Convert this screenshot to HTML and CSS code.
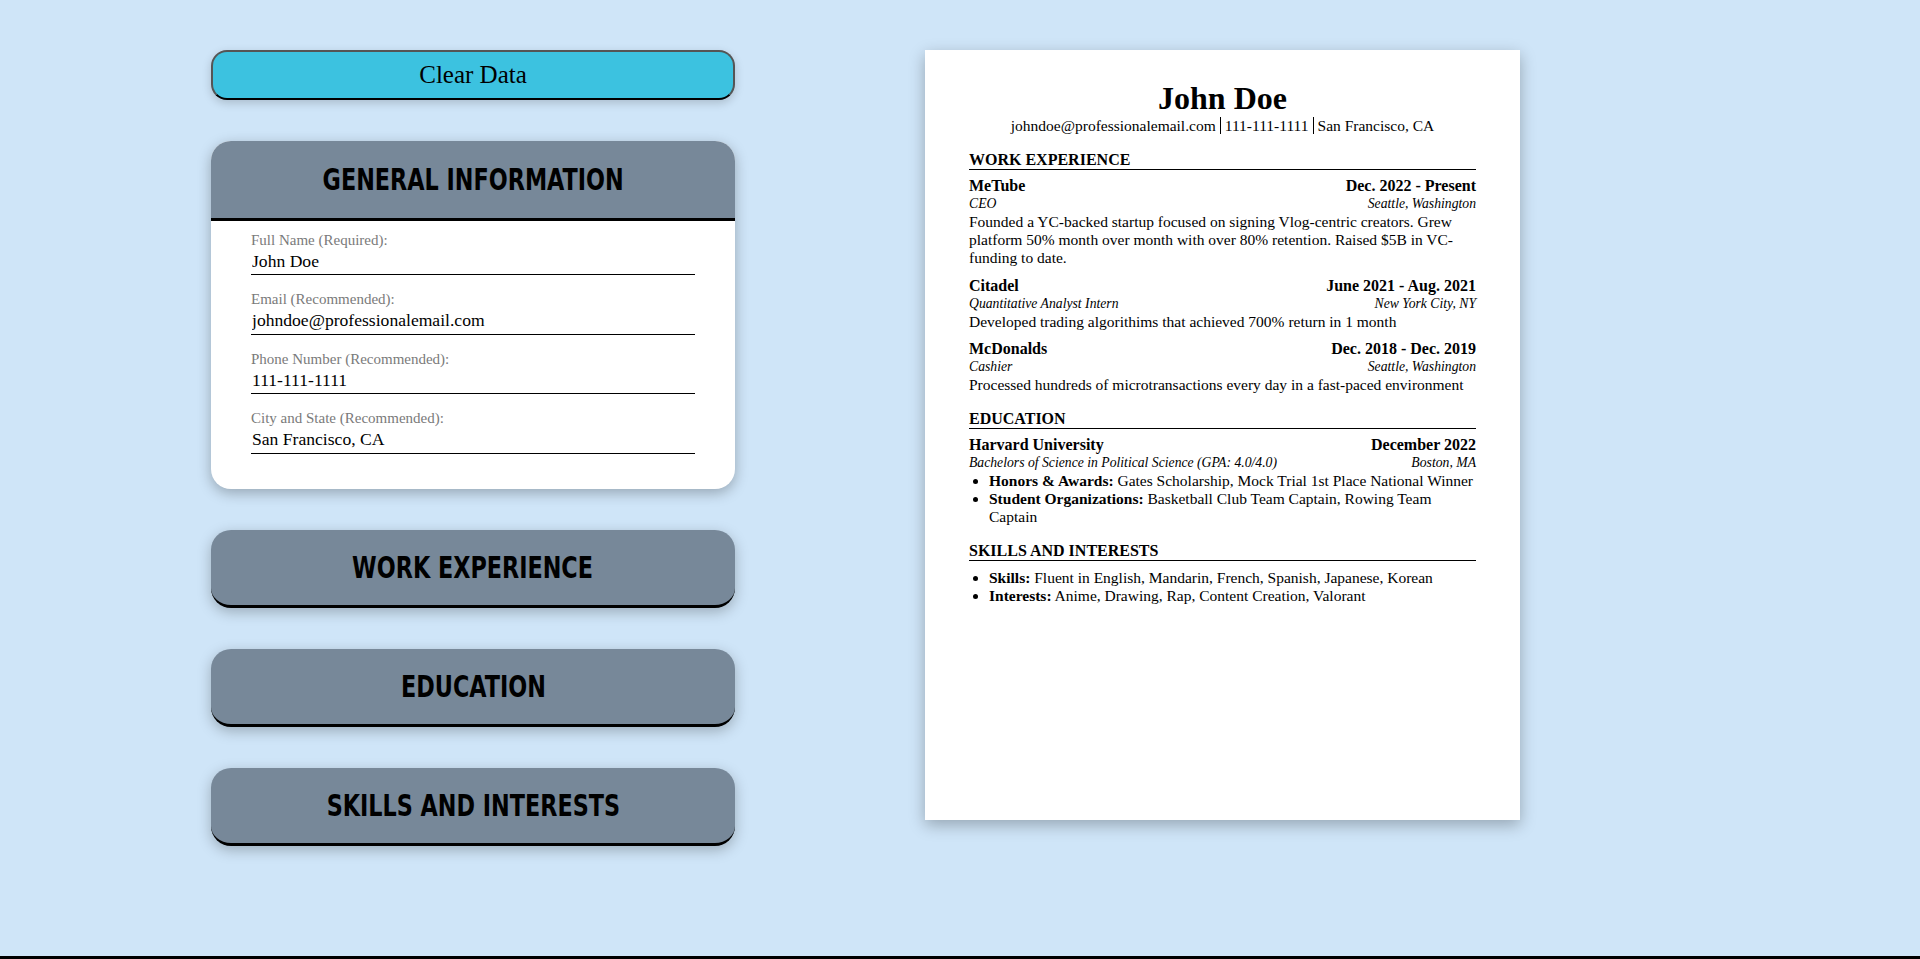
FILE: index.html
```html
<!DOCTYPE html>
<html lang="en">
<head>
<meta charset="utf-8">
<title>Resume Builder</title>
<link rel="stylesheet" href="styles.css">
</head>
<body>
<div class="page">
  <main class="layout">
    <section class="editor">
      <button class="clear-btn" type="button">Clear Data</button>

      <div class="card">
        <div class="card-head"><h2 class="heading">GENERAL INFORMATION</h2></div>
        <form class="card-body">
          <label class="field">
            <span class="field-label">Full Name (Required):</span>
            <input class="field-input" type="text" value="John Doe">
          </label>
          <label class="field">
            <span class="field-label">Email (Recommended):</span>
            <input class="field-input" type="text" value="johndoe@professionalemail.com">
          </label>
          <label class="field">
            <span class="field-label">Phone Number (Recommended):</span>
            <input class="field-input" type="text" value="111-111-1111">
          </label>
          <label class="field">
            <span class="field-label">City and State (Recommended):</span>
            <input class="field-input" type="text" value="San Francisco, CA">
          </label>
        </form>
      </div>

      <div class="tab"><h2 class="heading">WORK EXPERIENCE</h2></div>
      <div class="tab"><h2 class="heading">EDUCATION</h2></div>
      <div class="tab"><h2 class="heading">SKILLS AND INTERESTS</h2></div>
    </section>

    <article class="resume">
      <h1 class="r-name">John Doe</h1>
      <div class="r-contact">
        <span>johndoe@professionalemail.com</span><span class="sep"></span><span>111-111-1111</span><span class="sep"></span><span>San Francisco, CA</span>
      </div>

      <section class="r-section">
        <h3 class="r-title">WORK EXPERIENCE</h3>
        <div class="r-entries">
          <div class="r-entry">
            <div class="r-row r-bold"><span>MeTube</span><span>Dec. 2022 - Present</span></div>
            <div class="r-row r-italic"><span>CEO</span><span>Seattle, Washington</span></div>
            <p class="r-text">Founded a YC-backed startup focused on signing Vlog-centric creators. Grew platform 50% month over month with over 80% retention. Raised $5B in VC-funding to date.</p>
          </div>
          <div class="r-entry">
            <div class="r-row r-bold"><span>Citadel</span><span>June 2021 - Aug. 2021</span></div>
            <div class="r-row r-italic"><span>Quantitative Analyst Intern</span><span>New York City, NY</span></div>
            <p class="r-text">Developed trading algorithims that achieved 700% return in 1 month</p>
          </div>
          <div class="r-entry">
            <div class="r-row r-bold"><span>McDonalds</span><span>Dec. 2018 - Dec. 2019</span></div>
            <div class="r-row r-italic"><span>Cashier</span><span>Seattle, Washington</span></div>
            <p class="r-text">Processed hundreds of microtransactions every day in a fast-paced environment</p>
          </div>
        </div>
      </section>

      <section class="r-section">
        <h3 class="r-title">EDUCATION</h3>
        <div class="r-entries">
          <div class="r-entry">
            <div class="r-row r-bold"><span>Harvard University</span><span>December 2022</span></div>
            <div class="r-row r-italic"><span>Bachelors of Science in Political Science (GPA: 4.0/4.0)</span><span>Boston, MA</span></div>
            <ul class="r-list">
              <li><b>Honors &amp; Awards:</b> Gates Scholarship, Mock Trial 1st Place National Winner</li>
              <li><b>Student Organizations:</b> Basketball Club Team Captain, Rowing Team Captain</li>
            </ul>
          </div>
        </div>
      </section>

      <section class="r-section">
        <h3 class="r-title">SKILLS AND INTERESTS</h3>
        <ul class="r-list r-skills">
          <li><b>Skills:</b> Fluent in English, Mandarin, French, Spanish, Japanese, Korean</li>
          <li><b>Interests:</b> Anime, Drawing, Rap, Content Creation, Valorant</li>
        </ul>
      </section>
    </article>
  </main>
  <footer class="footer"></footer>
</div>
</body>
</html>
```

FILE: styles.css
```css
* { box-sizing: border-box; }

body {
  margin: 0;
  background: #cfe5f8;
  font-family: "Liberation Serif", "Times New Roman", serif;
  color: #000;
}

.page {
  min-height: 100vh;
  display: flex;
  flex-direction: column;
}

.layout {
  flex: 1;
  display: flex;
  align-items: flex-start;
  gap: 190px;
  padding: 50px 0 0 211px;
}

.editor {
  width: 524px;
  display: flex;
  flex-direction: column;
  gap: 41px;
}

.clear-btn {
  height: 50px;
  width: 100%;
  background: #3cc2e0;
  border: 2px solid #555;
  border-bottom-color: #000;
  border-radius: 16px;
  font-family: "Liberation Serif", serif;
  font-size: 25px;
  color: #000;
  box-shadow: 0 3px 10px rgba(0, 0, 0, 0.18);
  cursor: pointer;
}

.card {
  background: #fff;
  border-radius: 20px;
  box-shadow: 0 4px 14px rgba(0, 0, 0, 0.28);
  overflow: hidden;
}

.card-head {
  height: 80px;
  min-height: 0;
  max-height: 80px;
  background: #778899;
  border-bottom: 3px solid #000;
  display: flex;
  align-items: center;
  justify-content: center;
}

.heading {
  margin: 0;
  font-family: "DejaVu Sans Condensed", "DejaVu Sans", sans-serif;
  font-stretch: condensed;
  font-weight: 700;
  font-size: 31px;
  line-height: 1;
  color: #000;
  transform: scaleX(0.8);
  white-space: nowrap;
}

.card-body {
  display: flex;
  flex-direction: column;
  padding: 10.5px 40px 19.5px;
}

.field {
  display: flex;
  flex-direction: column;
  margin-bottom: 16px;
}

.field-label {
  font-size: 15px;
  line-height: 17px;
  color: #7a7a7a;
}

.field-input {
  height: 26.5px;
  padding: 0 1px;
  border: none;
  border-bottom: 1.5px solid #000;
  background: transparent;
  font-family: "Liberation Serif", serif;
  font-size: 17.6px;
  color: #000;
  outline: none;
}

.tab {
  height: 78px;
  background: #778899;
  border-bottom: 3px solid #000;
  border-radius: 20px;
  box-shadow: 0 4px 14px rgba(0, 0, 0, 0.25);
  display: flex;
  align-items: center;
  justify-content: center;
}

.resume {
  width: 595px;
  height: 770px;
  background: #fff;
  padding: 31px 44px;
  box-shadow: 0 5px 15px rgba(0, 0, 0, 0.28);
  font-size: 15.5px;
  line-height: 18px;
}

.r-name {
  margin: 0;
  font-size: 32px;
  line-height: 35px;
  text-align: center;
}

.r-contact {
  display: flex;
  justify-content: center;
  align-items: center;
  font-size: 15.5px;
  line-height: 19px;
}

.sep {
  display: inline-block;
  width: 0;
  height: 17px;
  border-left: 1.5px solid #000;
  margin: 0 4px;
}

.r-section {
  margin-top: 15.5px;
}

.r-title {
  margin: 0;
  font-size: 16px;
  line-height: 18px;
  font-weight: 700;
  border-bottom: 1.5px solid #000;
}

.r-entries {
  display: flex;
  flex-direction: column;
  gap: 9.5px;
  padding-top: 7.5px;
}

.r-row {
  display: flex;
  justify-content: space-between;
}

.r-bold { font-weight: 700; font-size: 16px; }
.r-italic { font-style: italic; font-size: 13.7px; }

.r-text { margin: 0; }

.r-list {
  margin: 0;
  padding-left: 20px;
  line-height: 18px;
}

.r-skills { padding-top: 8px; }

.footer {
  height: 3px;
  background: #000;
}
```
